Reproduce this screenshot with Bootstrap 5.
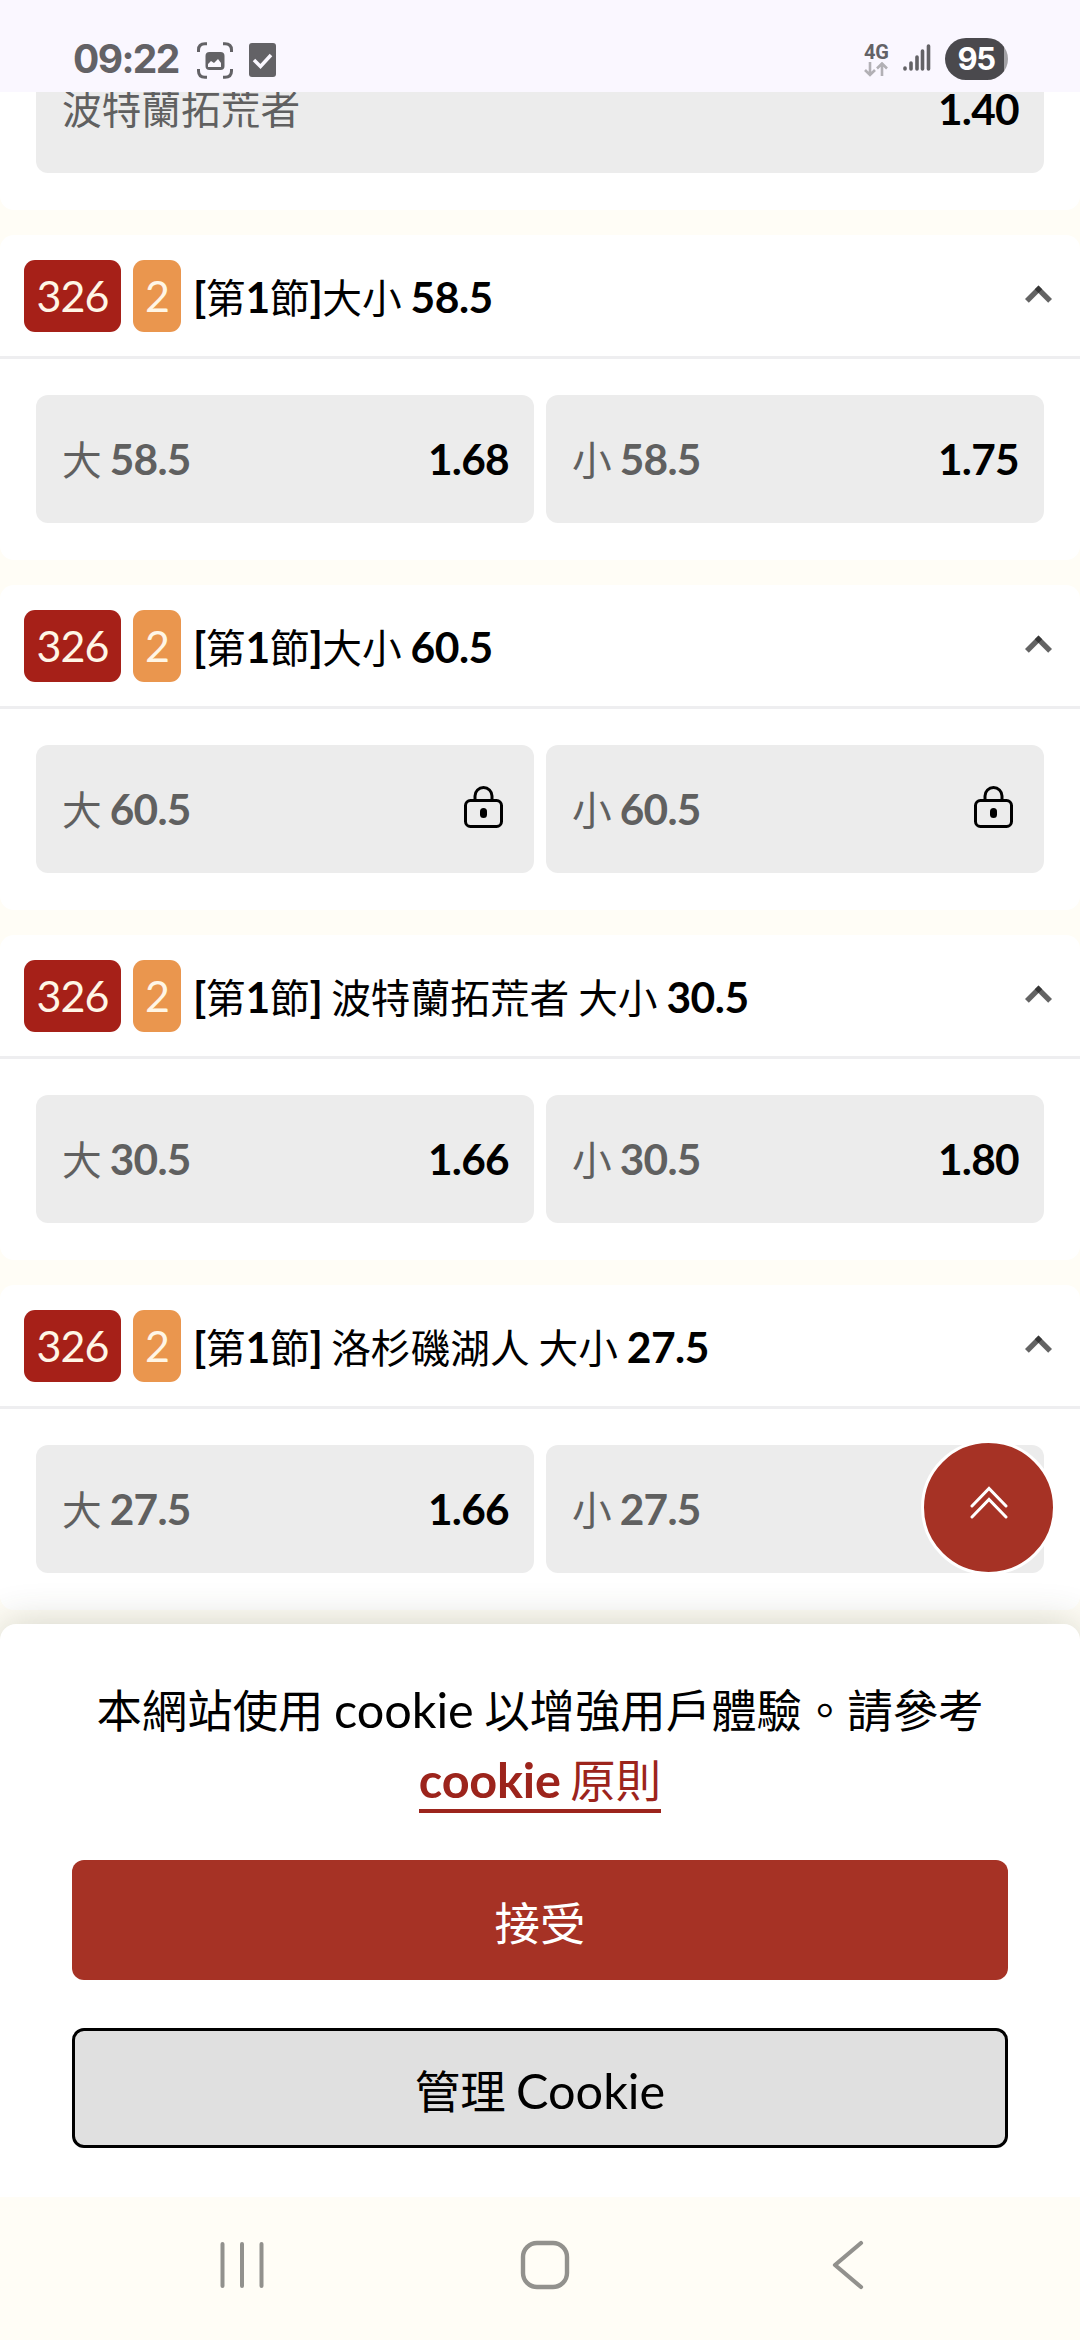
<!DOCTYPE html>
<html lang="zh-Hant">
<head>
<meta charset="utf-8">
<meta name="viewport" content="width=device-width, initial-scale=1">
<title>大小盤口</title>
<link href="https://cdn.jsdelivr.net/npm/bootstrap@5.3.0/dist/css/bootstrap.min.css" rel="stylesheet">
<style>
html, body { height: 100%; }
body { background: #fffdf6; color: #000; font-family: Lato, "Noto Sans CJK TC", sans-serif; font-size: 39.7px; line-height: 1.2; overflow: hidden; }
b { font-weight: 700; font-size: 42.4px; letter-spacing: -.7px; word-spacing: -1.6px; }
.screen { width: 1080px; height: 2340px; }
.statusbar { height: 92px; background: #faf7ff; padding: 26px 72px 0 73px; color: #636266; font-family: Inter, Roboto, sans-serif; z-index: 3; }
.clock { font-size: 39px; font-weight: 700; letter-spacing: -1.6px; line-height: 42px; width: 124px; }
.net { width: 26px; font-family: Roboto, sans-serif; font-weight: 700; font-size: 20px; line-height: 20px; letter-spacing: -.3px; }
.batt { width: 63px; height: 42px; border-radius: 21px; background: linear-gradient(90deg, #4a494d 59px, #a3a2a6 59px); color: #fff; font-size: 31px; font-weight: 700; letter-spacing: -1.5px; padding-right: 1px; }
.feed { height: 1532px; }
.market-list { margin-top: -207px; gap: 25px; }
.market { background: #fff; border: 0; border-radius: 14px; height: 325px; }
.market-head { height: 124px; border-bottom: 3px solid #eeeef0; padding: 25px 28px 24px 24px; gap: 12px; }
.tag { height: 72px; border-radius: 11px; color: #fff6e6; font-size: 43px; font-weight: 400; letter-spacing: -1px; }
.tag-no { width: 97px; background: #a62018; }
.tag-two { width: 48px; background: #ea964e; }
.ttl { white-space: pre; padding-top: 2px; }
.ttl b { font-size: 42.6px; letter-spacing: -.5px; word-spacing: -1px; }
.market-body { padding: 36px; gap: 12px; }
.odd { flex: 1 1 0; height: 128px; border-radius: 12px; background: #ececec; color: #606060; padding: 0 25px 0 26px; white-space: pre; }
.odd .price { color: #000; }
.odd .lock { margin-right: 6px; margin-top: -4px; }
.to-top { position: absolute; left: 921px; top: 1440px; width: 135px; height: 135px; border: 3px solid #fff; background: #a63225; z-index: 2; }
.sheet { height: 573px; background: #fff; border-radius: 16px 16px 0 0; box-shadow: 0 0 40px rgba(60,65,40,.24); padding: 52px 72px 0; z-index: 1; }
.notice { line-height: 70px; height: 140px; white-space: pre; font-size: 45.4px; }
.latin { font-size: 48.6px; line-height: 1; word-spacing: -2px; }
.notice a { color: #9c241c; border-bottom: 4px solid #9c241c; text-decoration: none; display: inline-block; line-height: 56px; height: 60px; }
.notice b { font-weight: 700; letter-spacing: -.2px; }
.choice { height: 120px; border-radius: 12px; font-size: 45.4px; padding: 8px 0 0; }
.choice-yes { background: #a63225; color: #fff; margin-top: 44px; }
.choice-manage { background: #e0e0e0; color: #000; border: 3px solid #000; margin-top: 48px; }
.navkeys { height: 143px; background: #fffdf6; padding: 0 215px 7px 217px; z-index: 2; }
.key-home { margin-right: 8px; }
</style>
<script src="https://cdn.jsdelivr.net/npm/bootstrap@5.3.0/dist/js/bootstrap.bundle.min.js"></script>
</head>
<body>
<svg class="d-none">
  <symbol id="i-up" viewBox="0 0 27 18"><path d="M1.9 15.9L15.4 2.4" stroke="#222" stroke-opacity=".7" stroke-width="5.4"/><path d="M25.1 15.9L11.6 2.4" stroke="#222" stroke-opacity=".7" stroke-width="5.4"/></symbol>
  <symbol id="i-lock" viewBox="0 0 39 42"><rect x="1.5" y="14.5" width="36" height="26" rx="5" fill="none" stroke="#000" stroke-width="3"/><path d="M11 14V10a8.5 8.5 0 0 1 17 0v4" fill="none" stroke="#000" stroke-width="3"/><rect x="16" y="22" width="7" height="10" rx="3.5"/></symbol>
</svg>
<div class="screen d-flex flex-column position-relative overflow-hidden">
  <header class="statusbar d-flex justify-content-between flex-shrink-0">
    <div class="d-flex pt-2 mt-1">
      <span class="clock">09:22</span>
      <svg width="36" height="37" viewBox="0 0 36 37" class="mt-1" fill="none" stroke="#636266" stroke-width="3"><path d="M1.5 10V8Q1.5 1.8 8 1.8h2M26 1.8h2Q34.5 1.8 34.5 8v2M34.5 27v2q0 6.2-6.5 6.2h-2M10 35.2H8Q1.5 35.2 1.5 29v-2"/><rect x="8.5" y="10" width="19" height="18" rx="4" fill="#636266" stroke="none"/><path d="M11 25v-3l3-3 3 2 4-4 3 4v4z" fill="#faf7ff" stroke="none"/></svg>
      <svg width="27" height="35" viewBox="0 0 27 35" class="mt-1 ms-3"><rect y="1" width="27" height="34" rx="3" fill="#636266"/><path d="M5 18l6.5 6.5L22 13" fill="none" stroke="#faf7ff" stroke-width="3.5"/></svg>
    </div>
    <div class="d-flex pt-2 mt-1">
      <div class="net mt-1">4G<svg width="24" height="15" viewBox="0 0 24 15" class="d-block" fill="none" stroke="#b2b0b5" stroke-width="2.6"><path d="M6 0v13M1 8l5 5 5-5M18 14V1M13 6.5l5-5 5 5"/></svg></div>
      <svg width="28" height="30" viewBox="0 0 28 30" class="mt-1" stroke="#636266" stroke-width="3.6" stroke-linecap="round" style="margin:0 14px 0 13px"><path d="M2 26v1M8 21v6M14 15v12M19.5 9v18M25.5 4v23"/></svg>
      <div class="batt d-flex align-items-center justify-content-center">95</div>
    </div>
  </header>
  <main class="feed overflow-hidden flex-shrink-0">
    <div class="market-list d-flex flex-column" id="markets"></div>
  </main>
  <button class="to-top btn rounded-circle p-0 d-flex align-items-center justify-content-center" aria-label="top">
    <svg width="40" height="34" viewBox="0 0 40 34" fill="none" stroke="#fff" stroke-width="3" stroke-linecap="round" style="margin-top:-11px"><path d="M3 21L20 3.5 37 21M3 32L20 14.5 37 32"/></svg>
  </button>
  <section class="sheet position-relative flex-shrink-0 text-center">
    <div class="notice">本網站使用<span class="latin"> cookie </span>以增強用戶體驗。請參考
<a href="#"><b class="latin">cookie </b>原則</a></div>
    <button class="choice choice-yes btn d-block w-100">接受</button>
    <button class="choice choice-manage btn d-block w-100">管理<span class="latin"> Cookie</span></button>
  </section>
  <nav class="navkeys d-flex justify-content-between align-items-center flex-shrink-0">
    <svg width="50" height="50" viewBox="0 0 50 50" stroke="#92918d" stroke-width="4" stroke-linecap="round"><path d="M5.5 4v42M25 4v42M44.5 4v42"/></svg>
    <svg class="key-home" width="50" height="50" viewBox="0 0 50 50" fill="none" stroke="#92918d" stroke-width="4.4"><rect x="3" y="3" width="44" height="44" rx="14"/></svg>
    <svg width="34" height="50" viewBox="0 0 34 50" fill="none" stroke="#92918d" stroke-width="4.2" stroke-linecap="round" stroke-linejoin="round"><path d="M30 3L4 25l26 22"/></svg>
  </nav>
</div>
<script>
const lock = '<svg class="lock" width="39" height="42"><use href="#i-lock"/></svg>';
const markets = [
  { title: '', odds: [['波特蘭拓荒者', '1.40']] },
  { title: '<b>[</b>第<b>1</b>節<b>]</b>大小<b> 58.5</b>', odds: [['大<b> 58.5</b>', '1.68'], ['小<b> 58.5</b>', '1.75']] },
  { title: '<b>[</b>第<b>1</b>節<b>]</b>大小<b> 60.5</b>', odds: [['大<b> 60.5</b>', ''], ['小<b> 60.5</b>', '']] },
  { title: '<b>[</b>第<b>1</b>節<b>] </b>波特蘭拓荒者<b> </b>大小<b> 30.5</b>', odds: [['大<b> 30.5</b>', '1.66'], ['小<b> 30.5</b>', '1.80']] },
  { title: '<b>[</b>第<b>1</b>節<b>] </b>洛杉磯湖人<b> </b>大小<b> 27.5</b>', odds: [['大<b> 27.5</b>', '1.66'], ['小<b> 27.5</b>', null]] }
];
document.getElementById('markets').innerHTML = markets.map(m => `
  <article class="market card flex-shrink-0">
    <div class="market-head d-flex align-items-center">${m.title ? `
      <span class="tag tag-no d-flex align-items-center justify-content-center">326</span>
      <span class="tag tag-two d-flex align-items-center justify-content-center">2</span>
      <span class="ttl">${m.title}</span>
      <svg class="ms-auto" width="27" height="18" style="margin-top:-5px"><use href="#i-up"/></svg>` : ''}
    </div>
    <div class="market-body d-flex">${m.odds.map(([n, p]) => `
      <div class="odd d-flex align-items-center justify-content-between"><span>${n}</span>${p ? `<b class="price">${p}</b>` : (p === null ? '' : lock)}</div>`).join('')}
    </div>
  </article>`).join('');
</script>
</body>
</html>
